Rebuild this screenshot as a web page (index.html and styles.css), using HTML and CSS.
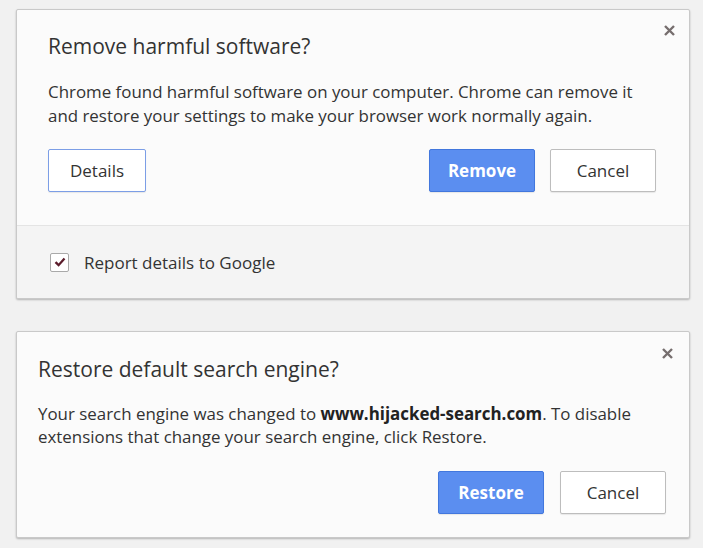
FILE: index.html
```html
<!DOCTYPE html>
<html lang="en">
<head>
<meta charset="utf-8">
<title>Chrome Cleanup dialogs</title>
<link rel="stylesheet" href="styles.css">
</head>
<body>
<main class="page">
  <section class="dialog dialog-cleanup">
    <button class="close" aria-label="Close">
      <svg viewBox="0 0 11 11" width="11" height="11"><path d="M1 1L10 10M10 1L1 10" stroke="#766e6e" stroke-width="2.4" fill="none"/></svg>
    </button>
    <div class="dialog-main">
      <h1 class="title">Remove harmful software?</h1>
      <p class="text">Chrome found harmful software on your computer. Chrome can remove it<br>and restore your settings to make your browser work normally again.</p>
      <div class="actions">
        <button class="btn btn-details">Details</button>
        <div class="spacer"></div>
        <button class="btn btn-primary">Remove</button>
        <button class="btn">Cancel</button>
      </div>
    </div>
    <footer class="dialog-footer">
      <label class="check">
        <span class="box">
          <svg viewBox="0 0 12 12" width="12" height="12"><path d="M1.5 6.2L4.6 9.2L10.5 2.6" stroke="#5b1c2b" stroke-width="2.3" fill="none"/></svg>
        </span>
        <span class="check-label">Report details to Google</span>
      </label>
    </footer>
  </section>

  <section class="dialog dialog-search">
    <button class="close" aria-label="Close">
      <svg viewBox="0 0 11 11" width="11" height="11"><path d="M1 1L10 10M10 1L1 10" stroke="#766e6e" stroke-width="2.4" fill="none"/></svg>
    </button>
    <h1 class="title">Restore default search engine?</h1>
    <p class="text">Your search engine was changed to <b>www.hijacked-search.com</b>. To disable<br>extensions that change your search engine, click Restore.</p>
    <div class="actions">
      <div class="spacer"></div>
      <button class="btn btn-primary">Restore</button>
      <button class="btn">Cancel</button>
    </div>
  </section>
</main>
</body>
</html>
```

FILE: styles.css
```css
html, body {
  margin: 0;
  padding: 0;
}
body {
  background: #f1f1f1;
  font-family: "Open Sans", "Noto Sans", "Liberation Sans", sans-serif;
  color: #333;
  width: 703px;
  height: 548px;
  overflow: hidden;
}
.page {
  display: flex;
  flex-direction: column;
  padding: 9px 13px 0 16px;
  gap: 32px;
}
.dialog {
  position: relative;
  background: #fbfbfb;
  border: 1px solid #c9c9c9;
  border-radius: 2px;
  box-shadow: 0 1px 2px rgba(0,0,0,0.25);
}
.close {
  position: absolute;
  top: 15px;
  right: 14px;
  width: 11px;
  height: 11px;
  padding: 0;
  border: 0;
  background: none;
  display: block;
}
.close svg { display: block; }
.title {
  margin: 0;
  font-size: 21px;
  font-weight: 400;
  line-height: 24px;
  color: #333;
}
.text {
  margin: 0;
  font-size: 16.9px;
  line-height: 24px;
  color: #333;
}
.text b { font-weight: 700; color: #222; }
.actions {
  display: flex;
  align-items: center;
  gap: 15px;
}
.spacer { flex: 1; }
.btn {
  font-family: inherit;
  font-size: 17px;
  color: #333;
  height: 43px;
  width: 106px;
  padding: 0;
  background: #fff;
  border: 1px solid #bdbdbd;
  border-radius: 2px;
  box-shadow: 0 1px 1px rgba(0,0,0,0.08);
}
.btn-details {
  width: 98px;
  border-color: #7c9ee6;
}
.btn-primary {
  background: #5b8ef0;
  border-color: #4277dd;
  color: #fff;
  font-weight: 700;
}

.dialog-cleanup { height: 288px; display: flex; flex-direction: column; }
.dialog-main {
  padding: 24px 33px 0 31px;
  flex: 1;
}
.dialog-cleanup .text { margin-top: 22px; }
.dialog-cleanup .actions { margin-top: 21px; }
.dialog-footer {
  height: 72px;
  background: #f4f4f4;
  border-top: 1px solid #e4e4e4;
  border-radius: 0 0 2px 2px;
  display: flex;
  align-items: center;
  padding-left: 33px;
}
.check {
  display: flex;
  align-items: center;
  gap: 15px;
  font-size: 17px;
  color: #333;
}
.box {
  width: 17px;
  height: 17px;
  background: #fff;
  border: 1px solid #a9a9a9;
  border-radius: 2px;
  display: flex;
  align-items: center;
  justify-content: center;
}
.box svg { display: block; }

.dialog-search {
  padding: 25px 23px 23px 21px;
}
.dialog-search .close { top: 16px; right: 16px; }
.dialog-search .text { margin-top: 21px; line-height: 23px; }
.dialog-search .actions { margin-top: 23px; gap: 16px; }
```
